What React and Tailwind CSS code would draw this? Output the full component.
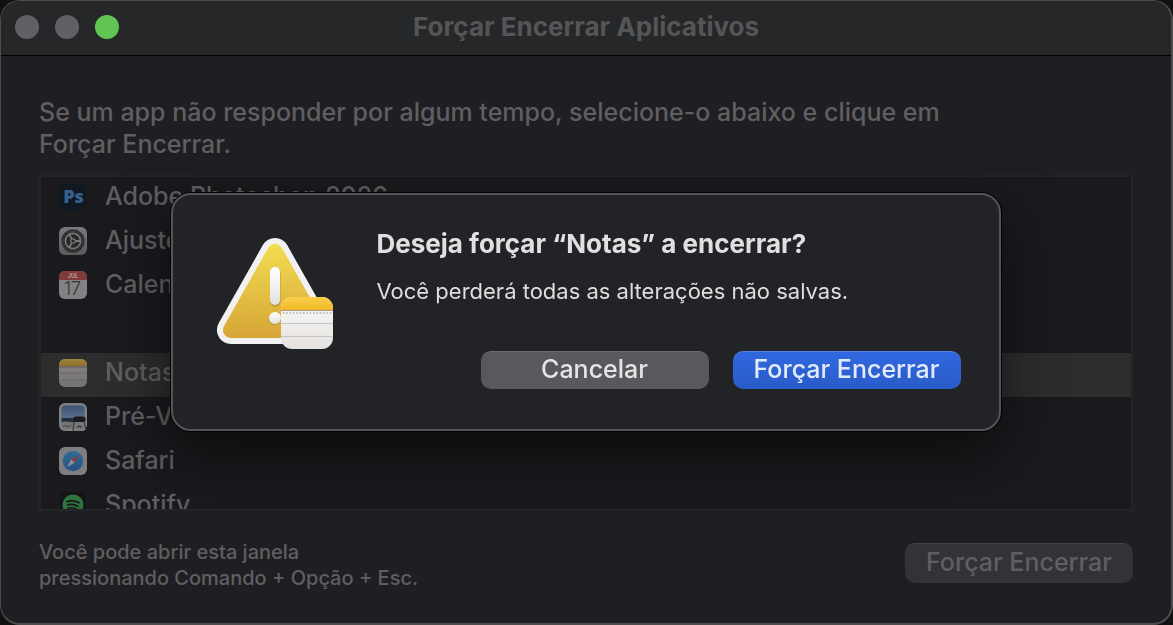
import { useState } from 'react'

const PhotoshopIcon = () => (
   <svg viewBox="0 0 28 28" className="size-7 shrink-0" aria-hidden="true">
      <rect x="1" y="1" width="26" height="26" rx="5" fill="#101922" />
      <text x="14.5" y="19.5" textAnchor="middle" fontFamily="Open Sans, sans-serif" fontWeight="800" fontSize="18" fill="#37608f">
         Ps
      </text>
   </svg>
)

const SettingsIcon = () => (
   <svg viewBox="0 0 28 28" className="size-7 shrink-0" aria-hidden="true">
      <defs>
         <linearGradient id="settings-bg" x1="0" y1="0" x2="0" y2="1">
            <stop offset="0" stopColor="#777a7c" />
            <stop offset="1" stopColor="#5a5a5a" />
         </linearGradient>
      </defs>
      <rect width="28" height="28" rx="6" fill="url(#settings-bg)" />
      <circle cx="14" cy="14" r="11.5" fill="#262728" />
      <circle cx="14" cy="14" r="9.8" fill="none" stroke="#58595a" strokeWidth="1" strokeDasharray="1 .8" />
      <circle cx="14" cy="14" r="7.6" fill="none" stroke="#77787a" strokeWidth="1.6" />
      <circle cx="14" cy="14" r="2.2" fill="none" stroke="#77787a" strokeWidth="1.2" />
      <path d="M16.4 14H21.5M12.8 11.9L10.2 7.5M12.8 16.1L10.2 20.5" stroke="#77787a" strokeWidth="1.8" />
   </svg>
)

const CalendarIcon = () => (
   <svg viewBox="0 0 28 28" className="size-7 shrink-0" aria-hidden="true">
      <rect width="28" height="28" rx="6" fill="#838181" />
      <path d="M0 9V6a6 6 0 0 1 6-6h16a6 6 0 0 1 6 6v3z" fill="#7f3a39" />
      <text x="14" y="7" textAnchor="middle" fontFamily="Inter, sans-serif" fontWeight="700" fontSize="5.5" fill="#b0a0a0">
         JUL
      </text>
      <text x="13.5" y="23.5" textAnchor="middle" fontFamily="Inter, sans-serif" fontWeight="300" fontSize="18" fill="#363435">
         17
      </text>
   </svg>
)

const NotesIcon = ({ dimmed }) => {
   const id = dimmed ? 'notes-dim' : 'notes'
   return (
      <svg viewBox="0 0 28 28" className="size-full" aria-hidden="true">
         <defs>
            <linearGradient id={`${id}-top`} x1="0" y1="0" x2="0" y2="1">
               <stop offset="0" stopColor={dimmed ? '#9c853e' : '#f9cf48'} />
               <stop offset="1" stopColor={dimmed ? '#8f7128' : '#f2b927'} />
            </linearGradient>
            <linearGradient id={`${id}-paper`} x1="0" y1="0" x2="0" y2="1">
               <stop offset="0" stopColor={dimmed ? '#868383' : '#fbfafa'} />
               <stop offset="1" stopColor={dimmed ? '#767373' : '#e5e2de'} />
            </linearGradient>
         </defs>
         <rect width="28" height="28" rx="6" fill={`url(#${id}-paper)`} />
         <path d="M0 7V6a6 6 0 0 1 6-6h16a6 6 0 0 1 6 6v1z" fill={`url(#${id}-top)`} />
         <path d="M0 7.3h28" stroke={dimmed ? '#5d5439' : '#a79d87'} strokeWidth=".6" />
         <path d="M1 8.6h27" stroke={dimmed ? '#5a5858' : '#b5b3b1'} strokeWidth=".9" strokeDasharray=".9 .9" />
         <path d="M0 14.3h28M0 21.3h28" stroke={dimmed ? '#5a5858' : '#c2c0c4'} strokeWidth=".5" />
      </svg>
   )
}

const PreviewIcon = () => (
   <svg viewBox="0 0 28 28" className="size-7 shrink-0" aria-hidden="true">
      <defs>
         <linearGradient id="preview-sky" x1="0" y1="0" x2="0" y2="1">
            <stop offset="0" stopColor="#3c5478" />
            <stop offset="1" stopColor="#768397" />
         </linearGradient>
      </defs>
      <rect width="28" height="28" rx="6" fill="#7f8082" />
      <rect x="2.5" y="2.5" width="23" height="23" rx="3.5" fill="url(#preview-sky)" />
      <path d="M2.5 15h10l2 1h11v4h-23z" fill="#1e2c44" />
      <path d="M2.5 19c4-1 7 0 12 0v6.5H6a3.5 3.5 0 0 1-3.5-3.500z" fill="#77736f" />
      <path d="M4 23.500l3-1 2 1.500 3-2" stroke="#45464a" strokeWidth="1" fill="none" />
      <path d="M15 17.5h10.500l1.800 8.500a6 6 0 0 1-5.300 2h-8.500z" fill="#7a797a" />
      <path d="M15.5 18l-1.700 9.500M25 18l1.800 8" stroke="#2b2c30" strokeWidth="1" fill="none" />
      <path d="M18 24.500c1-1.500 3.500-1.500 4.500 0" stroke="#2b2c30" strokeWidth="1.200" fill="none" />
      <rect x="14" y="13.5" width="12.500" height="5.500" rx="2.500" fill="#1b1c1f" />
   </svg>
)

const SafariIcon = () => (
   <svg viewBox="0 0 28 28" className="size-7 shrink-0" aria-hidden="true">
      <defs>
         <linearGradient id="safari-dial" x1="0" y1="0" x2="0" y2="1">
            <stop offset="0" stopColor="#316d96" />
            <stop offset="1" stopColor="#244f86" />
         </linearGradient>
      </defs>
      <rect width="28" height="28" rx="6" fill="#7f7e7e" />
      <circle cx="14" cy="14" r="10.2" fill="url(#safari-dial)" />
      <circle cx="14" cy="14" r="9" fill="none" stroke="#4a7799" strokeWidth=".7" strokeDasharray=".4 1" />
      <path d="M20 8l-4.3 7.700-3.400-3.400z" fill="#923c38" />
      <path d="M8 20l4.300-7.700 3.400 3.400z" fill="#908f91" />
   </svg>
)

const SpotifyIcon = () => (
   <svg viewBox="0 0 28 28" className="size-7 shrink-0" aria-hidden="true">
      <rect x="1" y="1" width="26" height="26" rx="5" fill="#151518" />
      <circle cx="14" cy="14" r="10.5" fill="#2f7440" />
      <path d="M8 10.6c4-1.200 8.500-.8 12 1.200M8.500 14c3.500-1 7.200-.6 10.300 1.200M9 17.200c3-.8 6-.5 8.700 1" stroke="#151518" strokeWidth="1.7" strokeLinecap="round" fill="none" />
   </svg>
)

const WarningIcon = () => (
   <svg viewBox="0 0 116 112" className="h-28 w-29" aria-hidden="true">
      <defs>
         <linearGradient id="warning-fill" gradientUnits="userSpaceOnUse" x1="0" y1="8" x2="0" y2="101">
            <stop offset="0" stopColor="#f2dc50" />
            <stop offset="1" stopColor="#d6a537" />
         </linearGradient>
         <linearGradient id="warning-mark" x1="0" y1="0" x2="0" y2="1">
            <stop offset="0" stopColor="#ffffff" />
            <stop offset="1" stopColor="#e3e2e0" />
         </linearGradient>
      </defs>
      <path d="M58 15L14 93H102Z" fill="#f2f1f1" stroke="#f2f1f1" strokeWidth="28" strokeLinejoin="round" />
      <path d="M58 15L14 93H102Z" fill="url(#warning-fill)" stroke="url(#warning-fill)" strokeWidth="16" strokeLinejoin="round" />
      <rect x="53" y="31" width="10.5" height="38.5" rx="5" fill="#b8983a" />
      <circle cx="58" cy="82" r="6.2" fill="#b8983a" />
      <rect x="53" y="30" width="10" height="38" rx="5" fill="url(#warning-mark)" />
      <circle cx="58" cy="81" r="6" fill="url(#warning-mark)" />
   </svg>
)

const apps = [
   { id: 'photoshop', name: 'Adobe Photoshop 2026', icon: <PhotoshopIcon /> },
   { id: 'ajustes', name: 'Ajustes', icon: <SettingsIcon /> },
   { id: 'calendario', name: 'Calendário', icon: <CalendarIcon /> },
   { id: 'vazio', name: '', icon: null },
   {
      id: 'notas',
      name: 'Notas',
      icon: (
         <span className="size-7 shrink-0">
            <NotesIcon dimmed />
         </span>
      ),
   },
   { id: 'previa', name: 'Pré-Visualização', icon: <PreviewIcon /> },
   { id: 'safari', name: 'Safari', icon: <SafariIcon /> },
   { id: 'spotify', name: 'Spotify', icon: <SpotifyIcon /> },
]

const TitleBar = () => (
   <header className="grid h-[55px] shrink-0 grid-cols-[1fr_auto_1fr] items-center border-b border-black bg-[#262728] px-3.5 pb-0.5">
      <div className="flex gap-4">
         <button type="button" aria-label="Fechar" className="size-6 rounded-full bg-[#605f64]" />
         <button type="button" aria-label="Minimizar" className="size-6 rounded-full bg-[#605f64]" />
         <button type="button" aria-label="Ampliar" className="size-6 rounded-full bg-[#61c554]" />
      </div>
      <h1 className="text-[26px] leading-8 font-bold text-[#555557]">Forçar Encerrar Aplicativos</h1>
   </header>
)

const AppList = ({ selected, onSelect }) => (
   <ul role="listbox" aria-label="Aplicativos" className="min-h-0 flex-1 overflow-y-auto border-2 border-[#242427] bg-[#1a191d] [scrollbar-width:none]">
      {apps.map((app) => (
         <li key={app.id} role="option" aria-selected={app.id === selected} onClick={() => app.name && onSelect(app.id)} className={`flex h-11 items-start gap-[18px] px-4.5 pt-1.5 ${app.id === selected ? 'bg-[#2d2d2e]' : ''}`}>
            {app.icon}
            <span className="text-[25px] leading-[26px] font-medium">{app.name}</span>
         </li>
      ))}
   </ul>
)

const ConfirmDialog = ({ onClose }) => (
   <div className="fixed inset-0 flex items-center justify-center pr-0.5 pb-0.5">
      <div role="alertdialog" aria-labelledby="dialog-title" aria-describedby="dialog-text" className="flex w-full max-w-[830px] gap-11 rounded-[20px] border-2 border-[#545558] bg-[#222326] pt-8 pr-[38px] pb-10 pl-11 shadow-[0_0_0_1px_#000,0_24px_60px_rgba(0,0,0,0.55)]">
         <div className="relative mt-2.5 shrink-0 self-start">
            <WarningIcon />
            <span className="absolute right-0 bottom-0 size-13">
               <NotesIcon />
            </span>
         </div>
         <div className="flex flex-1 flex-col">
            <h2 id="dialog-title" className="text-[26px] leading-[34px] font-bold text-[#e0e0e1]">
               Deseja forçar “Notas” a encerrar?
            </h2>
            <p id="dialog-text" className="mt-3.5 text-[22px] leading-8 text-[#dedede]">
               Você perderá todas as alterações não salvas.
            </p>
            <div className="mt-11 flex justify-end gap-6">
               <button type="button" onClick={onClose} className="h-[38px] w-57 rounded-[10px] border-t border-[#6b6a6e] bg-[#59585c] pb-0.5 text-[25px] leading-8 font-medium text-[#e5e5e6]">
                  Cancelar
               </button>
               <button type="button" onClick={onClose} className="h-[38px] w-57 rounded-[10px] border-t border-[#5580e0] bg-linear-to-b from-[#3068e0] to-[#2a5cc8] pb-0.5 text-[25px] leading-8 font-medium text-[#e3eafa]">
                  Forçar Encerrar
               </button>
            </div>
         </div>
      </div>
   </div>
)

const App = () => {
   const [selected, setSelected] = useState('notas')
   const [confirming, setConfirming] = useState(true)

   return (
      <div className="h-screen bg-[#111112] font-['Inter','Liberation_Sans',sans-serif] text-[#5f5f61]">
         <main className="flex h-full flex-col overflow-hidden rounded-[20px] border border-r-2 border-b-2 border-[#4d4d50] bg-[#1f1e22]">
            <TitleBar />
            <div className="flex min-h-0 flex-1 flex-col px-[38px] pt-10 pb-8">
               <p className="mb-[15px] max-w-[940px] text-[25px] leading-8 font-medium">Se um app não responder por algum tempo, selecione-o abaixo e clique em Forçar Encerrar.</p>
               <AppList selected={selected} onSelect={setSelected} />
               <footer className="mt-7 flex items-start justify-between">
                  <p className="text-[20px] leading-[26px] font-medium">
                     Você pode abrir esta janela
                     <br />
                     pressionando Comando + Opção + Esc.
                  </p>
                  <button type="button" onClick={() => setConfirming(true)} className="mt-1 h-10 w-57 rounded-[10px] border-t border-[#434246] bg-[#333236] pb-1 text-[25px] leading-8 font-medium">
                     Forçar Encerrar
                  </button>
               </footer>
            </div>
         </main>
         {confirming && <ConfirmDialog onClose={() => setConfirming(false)} />}
      </div>
   )
}

export default App
